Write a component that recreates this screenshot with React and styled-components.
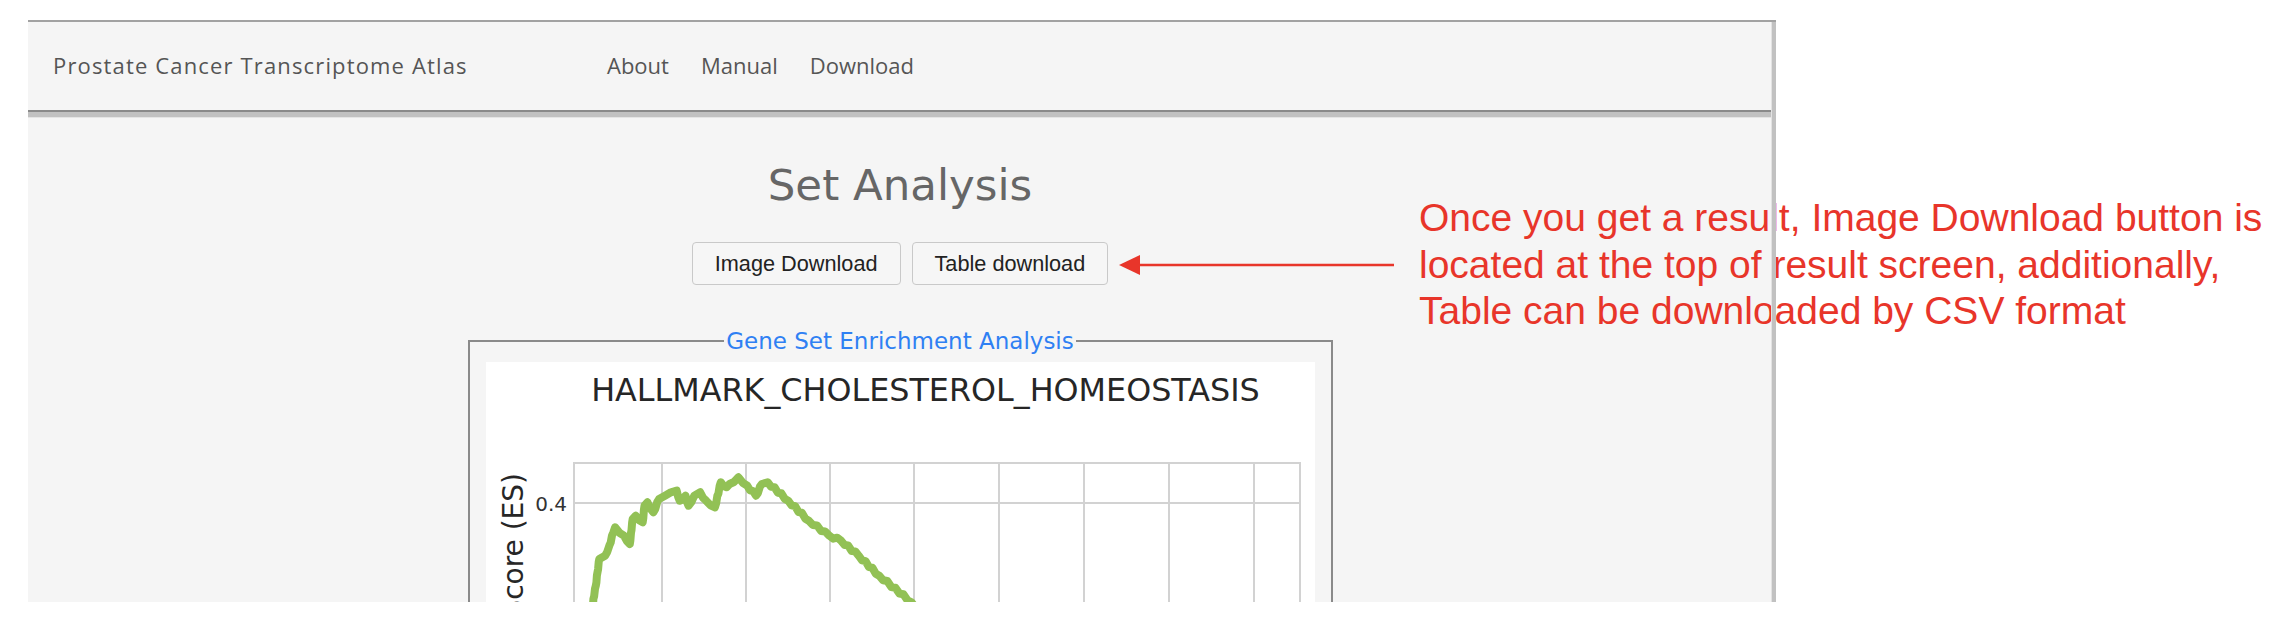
import React from "react";
import styled, { createGlobalStyle } from "styled-components";

const GlobalStyle = createGlobalStyle`
  html, body { margin: 0; padding: 0; background: #ffffff; }
  * { box-sizing: border-box; }
`;

const Page = styled.div`
  position: relative;
  width: 2278px;
  height: 628px;
  overflow: hidden;
  background: #ffffff;
`;

const Frame = styled.div`
  position: relative;
  margin: 20px 0 0 28px;
  width: 1748px;
  height: 582px;
  padding-right: 4px;
  border-top: 2px solid #a2a2a2;
  overflow: hidden;
  display: flex;
  flex-direction: column;
  &::after {
    content: "";
    position: absolute;
    top: 0;
    right: 0;
    bottom: 0;
    width: 4px;
    background: #c1c1c1;
    box-shadow: -1px 0 0 #e2e2e2;
    z-index: 3;
  }
`;

const NavBar = styled.nav`
  height: 90px;
  flex: none;
  display: flex;
  align-items: center;
  padding: 0 0 2px 25px;
  background: #f5f5f5;
  border-bottom: 2px solid #8a8a8a;
  font-family: "Open Sans", "Liberation Sans", sans-serif;
  color: #555555;
`;

const Brand = styled.div`
  font-size: 22px;
  letter-spacing: 1.15px;
  width: 554px;
`;

const NavLinks = styled.div`
  display: flex;
  gap: 32px;
`;

const NavLink = styled.a`
  font-size: 22px;
  color: #555555;
  text-decoration: none;
`;

const Content = styled.main`
  flex: 1;
  display: flex;
  flex-direction: column;
  align-items: center;
  background: #f5f5f5;
  border-top: 5px solid #c1c1c1;
  box-shadow: inset 0 1px 0 #e4e4e4;
`;

const Title = styled.h1`
  margin: 47px 0 0;
  font-family: "DejaVu Sans", Verdana, sans-serif;
  font-weight: normal;
  font-size: 43.5px;
  line-height: 43px;
  color: #666666;
`;

const ButtonRow = styled.div`
  margin-top: 35px;
  display: flex;
  gap: 11px;
`;

const Button = styled.button`
  height: 43px;
  padding: 0 22px;
  font-family: "Liberation Sans", Arial, sans-serif;
  font-size: 21.7px;
  color: #222222;
  background: #f6f6f6;
  border: 1px solid #c9c9c9;
  border-radius: 4px;
`;

const Fieldset = styled.fieldset`
  margin: 43px 0 0;
  width: 865px;
  min-width: 0;
  padding: 8px 16px 0;
  border: 2px solid #8a8a8a;
`;

const Legend = styled.legend`
  margin: 0 auto;
  padding: 0 2px;
  font-family: "DejaVu Sans", Verdana, sans-serif;
  font-size: 23px;
  line-height: 26px;
  color: #2f80f3;
`;

const PlotPanel = styled.div`
  width: 829px;
  height: 400px;
  background: #ffffff;
`;

const Annotation = styled.p`
  position: absolute;
  left: 1419px;
  top: 195px;
  margin: 0;
  font-family: "Liberation Sans", Arial, sans-serif;
  font-size: 39px;
  line-height: 46.5px;
  color: #e8352a;
  white-space: nowrap;
  z-index: 2;
`;

const Arrow = styled.svg`
  position: absolute;
  left: 1116px;
  top: 253px;
  z-index: 2;
`;

const keyPts = [
  [104, 275], [107.4, 237], [109.8, 223.7], [111.5, 210.3], [113.3, 197], [119.1, 193.7],
  [123.3, 183.7], [127.4, 170.3], [129.1, 165.3], [137.9, 173.7], [143.8, 182],
  [146.7, 157], [149.7, 153.7], [156.7, 160.3], [158.5, 143.7], [161.4, 140.3],
  [167.3, 150.3], [173.1, 137], [179, 133.7], [184.9, 130.3], [190.7, 128.7],
  [193.7, 138.7], [199.5, 133.7], [202.5, 143.7], [208.3, 133.7], [214.2, 130.3],
  [220.1, 138.7], [228.9, 145.3], [234.8, 120.3], [240.6, 125.3], [243.6, 122],
  [252.4, 115.3], [261.2, 123.7], [270, 133.7], [275.8, 122], [281.7, 120.3],
  [302.2, 138.7], [322.8, 158.7], [343.3, 173.7], [355.1, 178.7], [372.7, 193.7],
  [393.2, 213.7], [425.5, 240.3], [480, 290],
];

function jaggy(points) {
  const out = [];
  for (let i = 0; i < points.length - 1; i++) {
    const [x0, y0] = points[i];
    const [x1, y1] = points[i + 1];
    const d = Math.hypot(x1 - x0, y1 - y0);
    const n = Math.max(1, Math.round(d / 5));
    for (let k = 0; k < n; k++) {
      const t = k / n;
      const j = k === 0 ? 0 : (k % 2 ? 1.3 : -1.3);
      out.push(`${(x0 + (x1 - x0) * t).toFixed(1)},${(y0 + (y1 - y0) * t + j).toFixed(1)}`);
    }
  }
  const last = points[points.length - 1];
  out.push(`${last[0]},${last[1]}`);
  return out.join(" ");
}

const gridX = [176, 260, 344, 428, 513, 598, 683, 768];

function EnrichmentPlot() {
  return (
    <svg width="829" height="400" viewBox="0 0 829 400">
      <text
        x="439.5"
        y="39"
        textAnchor="middle"
        fontFamily="DejaVu Sans, sans-serif"
        fontSize="31.8"
        fill="#262626"
      >
        HALLMARK_CHOLESTEROL_HOMEOSTASIS
      </text>
      <rect x="88" y="101" width="726" height="420" fill="none" stroke="#d2d2d2" strokeWidth="2" />
      {gridX.map((x) => (
        <line key={x} x1={x} y1="101" x2={x} y2="521" stroke="#d2d2d2" strokeWidth="2" />
      ))}
      <line x1="88" y1="141" x2="814" y2="141" stroke="#d2d2d2" strokeWidth="2" />
      <text x="81" y="149" textAnchor="end" fontFamily="DejaVu Sans, sans-serif" fontSize="20" fill="#333">
        0.4
      </text>
      <text
        transform="translate(37,111) rotate(-90)"
        textAnchor="end"
        fontFamily="DejaVu Sans, sans-serif"
        fontSize="28"
        fill="#262626"
      >
        Enrichment Score (ES)
      </text>
      <polyline
        points={jaggy(keyPts)}
        fill="none"
        stroke="#92c155"
        strokeWidth="8"
        strokeLinejoin="round"
        strokeLinecap="round"
      />
    </svg>
  );
}

export default function App() {
  return (
    <>
      <GlobalStyle />
      <Page>
        <Frame>
          <NavBar>
            <Brand>Prostate Cancer Transcriptome Atlas</Brand>
            <NavLinks>
              <NavLink href="#">About</NavLink>
              <NavLink href="#">Manual</NavLink>
              <NavLink href="#">Download</NavLink>
            </NavLinks>
          </NavBar>
          <Content>
            <Title>Set Analysis</Title>
            <ButtonRow>
              <Button>Image Download</Button>
              <Button>Table download</Button>
            </ButtonRow>
            <Fieldset>
              <Legend>Gene Set Enrichment Analysis</Legend>
              <PlotPanel>
                <EnrichmentPlot />
              </PlotPanel>
            </Fieldset>
          </Content>
        </Frame>
        <Arrow width="282" height="24" viewBox="0 0 282 24">
          <line x1="22" y1="12" x2="278" y2="12" stroke="#e8352a" strokeWidth="2.6" />
          <polygon points="3,12 24,2 24,22" fill="#e8352a" />
        </Arrow>
        <Annotation>
          Once you get a result, Image Download button is
          <br />
          located at the top of result screen, additionally,
          <br />
          Table can be downloaded by CSV format
        </Annotation>
      </Page>
    </>
  );
}
